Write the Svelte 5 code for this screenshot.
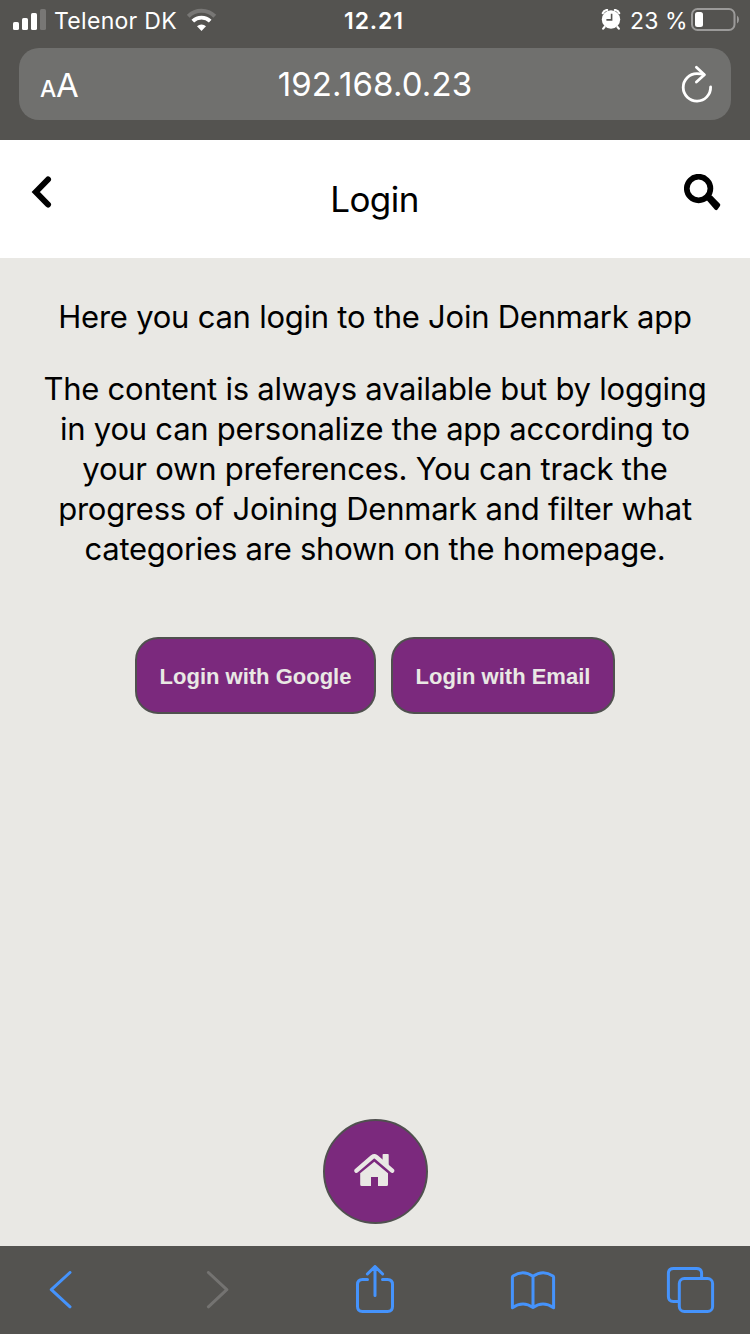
<script>
  const paragraphs = [
    ['Here you can login to the Join Denmark app'],
    [
      'The content is always available but by logging',
      'in you can personalize the app according to',
      'your own preferences. You can track the',
      'progress of Joining Denmark and filter what',
      'categories are shown on the homepage.'
    ]
  ];
</script>

<div class="phone">
  <header class="browser">
    <div class="status">
      <div class="side">
        <svg class="signal" width="34" height="22" viewBox="13 8 34 22" fill="#fff">
          <rect x="13" y="22" width="6" height="8" rx="1.6" />
          <rect x="22" y="18" width="6" height="12" rx="1.6" />
          <rect x="31" y="13" width="6" height="17" rx="1.6" />
          <rect x="40" y="9" width="6" height="21" rx="1.6" fill="#787775" />
        </svg>
        <span class="carrier">Telenor DK</span>
        <svg class="wifi" width="30" height="23" viewBox="187 8 30 23" fill="none">
          <path d="M188.2 16.3a19 19 0 0 1 26.600 0" stroke="#787775" stroke-width="4" />
          <path d="M192.800 21.200a12.500 12.500 0 0 1 17.400 0" stroke="#fff" stroke-width="3.800" />
          <path d="M197 26.300a6.600 6.600 0 0 1 9 0L201.500 31z" fill="#fff" />
        </svg>
      </div>
      <span class="time">12.21</span>
      <div class="side right">
        <svg width="20" height="21" viewBox="601 9 20 21" fill="none">
          <circle cx="611" cy="19.500" r="9.200" fill="#fff" />
          <path d="M602.800 13.200a5 5 0 0 1 4.300-3.200M619.200 13.200a5 5 0 0 0-4.300-3.200M604.500 27l-1.300 1.600M617.500 27l1.300 1.600" stroke="#fff" stroke-width="2.200" stroke-linecap="round" />
          <path d="M611.600 13.800v6.100h-5.200" stroke="#545350" stroke-width="1.600" />
        </svg>
        <span class="percent">23 %</span>
        <svg class="battery" width="49" height="24" viewBox="691 8 49 24">
          <rect x="692" y="9" width="42.500" height="21" rx="5.500" fill="none" stroke="#9b9a99" stroke-width="2" />
          <rect x="695" y="12" width="8" height="15" rx="2.500" fill="#fff" />
          <path d="M737 15.500q2 1.500 2 4t-2 4z" fill="#9b9a99" />
        </svg>
      </div>
    </div>
    <div class="address">
      <span class="size"><small>A</small><big>A</big></span>
      <span class="url">192.168.0.23</span>
      <svg width="34" height="40" viewBox="680 64 34 40" fill="none" stroke="#fff" stroke-width="2.800" stroke-linecap="round" stroke-linejoin="round">
        <path d="M710.600 87a13.700 13.700 0 1 1-13.700-13.300q4 0 7 1" />
        <path d="M696.400 67.300l8 7.500-8 7.200" />
      </svg>
    </div>
  </header>

  <nav class="titlebar">
    <svg width="21" height="33" viewBox="31 176 21 33" fill="none" stroke="#000" stroke-width="6">
      <path d="M48 179.500L35.800 192L48 204.500" stroke-linecap="round" />
    </svg>
    <h1>Login</h1>
    <svg width="37" height="37" viewBox="684 174 37 37">
      <circle cx="698.600" cy="188.500" r="11.800" fill="none" stroke="#000" stroke-width="5.700" />
      <path d="M708.300 199.500L710.800 197L718.600 204.900L716.100 208.400Z" fill="#000" stroke="#000" stroke-width="3.400" stroke-linejoin="round" />
    </svg>
  </nav>

  <main>
    {#each paragraphs as lines}
      <p>
        {#each lines as line}<span>{line}</span>{/each}
      </p>
    {/each}
    <div class="actions">
      <button class="google">Login with Google</button>
      <button class="email">Login with Email</button>
    </div>
    <button class="home" aria-label="Home">
      <svg width="42" height="35" viewBox="354 1153 42 35" fill="#e9e8e4">
        <path d="M382.600 1154.800q0-.8.800-.8h4.500q.8 0 .8.800v11.400l-6.100-5z" />
        <path d="M356.500 1170.700L372.300 1157q2-1.500 4 0l15.800 13.700" fill="none" stroke="#e9e8e4" stroke-width="4.400" stroke-linecap="round" />
        <path d="M374.300 1161.800L388 1173.200v11.300q0 1.500-1.500 1.500H378v-9h-7v9h-9.300q-1.500 0-1.500-1.500v-11.300z" />
      </svg>
    </button>
  </main>

  <footer>
    <svg width="24" height="38" viewBox="49 1271 24 38" stroke="#4593fc"><path d="M70 1272.500L51.300 1289.700L70 1306.800" /></svg>
    <svg width="24" height="38" viewBox="205 1271 24 38" stroke="#747371"><path d="M208.400 1272.500L226.800 1289.700L208.400 1306.800" /></svg>
    <svg width="40" height="50" viewBox="355 1265 40 50" stroke="#4593fc">
      <path d="M367.500 1279.600h-5q-5 0-5 5v21.900q0 5 5 5h25q5 0 5-5v-21.900q0-5-5-5h-5M375 1295.500v-28M367.400 1274l7.600-7.500 7.600 7.500" />
    </svg>
    <svg width="46" height="40" viewBox="510 1270 46 40" stroke="#4593fc">
      <path d="M512.400 1307.700v-30.500q0-.8.700-1.300q9.900-6.600 19.900.3q10-6.900 19.900-.3q.7.500.7 1.300v30.500q-10.500-7.400-20.600-.3q-10.100-7.100-20.600.3zM533 1276.500v31" />
    </svg>
    <svg width="49" height="48" viewBox="666 1266 49 48" stroke="#4593fc">
      <path d="M678 1301.600h-4.600q-5 0-5-5v-23q0-5 5-5h23.200q5 0 5 5v4" />
      <rect x="679.300" y="1278.500" width="33.300" height="33" rx="5" />
    </svg>
  </footer>
</div>

<style>
  :global(body) { margin: 0; }
  .phone {
    width: 750px;
    height: 1334px;
    display: flex;
    flex-direction: column;
    overflow: hidden;
    background: #e9e8e4;
    font-family: Inter, "Liberation Sans", sans-serif;
    color: #000;
    white-space: nowrap;
  }
  svg { display: block; flex: none; }
  .browser {
    height: 140px;
    background: #545350;
    color: #fff;
    box-sizing: border-box;
  }
  .status {
    height: 48px;
    box-sizing: border-box;
    padding: 8px 10px 0 13px;
    display: grid;
    grid-template-columns: 330px 62px 1fr;
    align-items: start;
    font-size: 23px;
    line-height: 26px;
  }
  .side { display: flex; align-items: flex-start; }
  .right { justify-content: flex-end; }
  .carrier { margin-left: 7px; width: 133px; letter-spacing: 0.3px; }
  .time { font-weight: 600; text-align: center; letter-spacing: 0.9px; }
  .right svg:first-child { margin-top: 1px; }
  .percent { margin: 0 4px 0 9px; width: 57px; letter-spacing: 0.1px; }
  .address {
    margin: 0 19px;
    height: 72px;
    border-radius: 20px;
    background: #70706e;
    box-sizing: border-box;
    padding: 0 17px 0 21px;
    display: grid;
    grid-template-columns: 56px 1fr 60px;
    align-items: center;
  }
  .address svg { justify-self: end; }
  .size { display: flex; align-items: baseline; line-height: 40px; margin-top: 5px; }
  .size small { font-size: 23px; width: 16px; font-weight: 500; }
  .size big { font-size: 33px; }
  .url { font-size: 33px; text-align: center; line-height: 40px; letter-spacing: 0.15px; }
  .titlebar {
    height: 118px;
    flex: none;
    background: #fff;
    box-sizing: border-box;
    padding: 34px 29px 0 31px;
    display: flex;
    justify-content: space-between;
    align-items: flex-start;
  }
  .titlebar svg:first-child { margin-top: 2px; }
  h1 { margin: 3px 0 0 13px; font-size: 35px; line-height: 44px; font-weight: 400; letter-spacing: -0.55px; }
  main {
    height: 988px;
    flex: none;
    box-sizing: border-box;
    padding: 39px 0 22px;
    display: flex;
    flex-direction: column;
    align-items: center;
  }
  p { margin: 0 0 32px; font-size: 31px; line-height: 40px; text-align: center; letter-spacing: -0.24px; }
  p span { display: block; }
  .actions { display: flex; gap: 15px; margin-top: 36px; }
  button {
    box-sizing: border-box;
    border: 2px solid #50504f;
    background: #7b297d;
    color: #e9e8e4;
    padding: 0;
  }
  .actions button {
    height: 77px;
    border-radius: 23px;
    padding-top: 2px;
    font: bold 22px/26px "Liberation Sans", Arial, sans-serif;
  }
  .google { width: 241px; }
  .email { width: 224px; }
  .home {
    width: 105px;
    height: 105px;
    border-radius: 50%;
    margin: auto 0 0 1px;
    display: flex;
    align-items: center;
    justify-content: center;
  }
  .home svg { margin: 0 2px 3px 0; }
  footer {
    height: 88px;
    flex: none;
    background: #545350;
    box-sizing: border-box;
    padding-left: 49px;
    display: grid;
    grid-template-columns: 156px 150px 155px 156px 49px;
    align-items: center;
  }
  footer svg { fill: none; stroke-width: 3; stroke-linecap: round; stroke-linejoin: round; }
</style>
